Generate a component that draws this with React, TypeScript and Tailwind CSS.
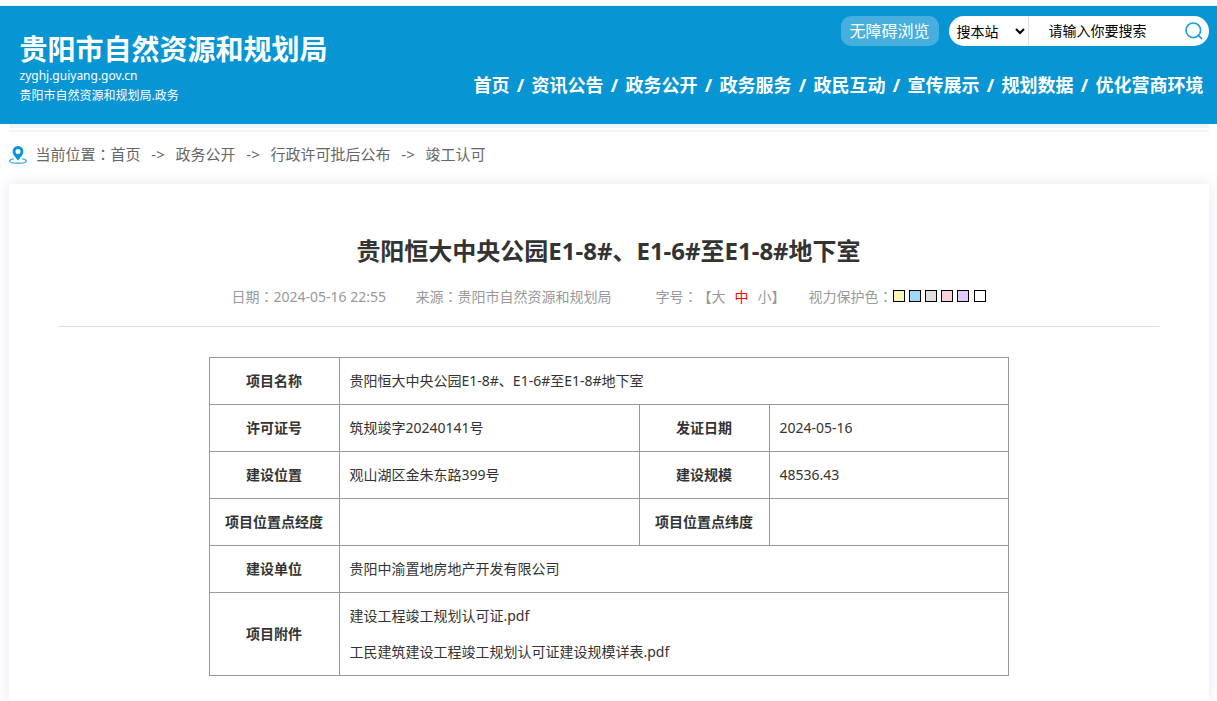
import React from "react";

const NAV = ["首页", "资讯公告", "政务公开", "政务服务", "政民互动", "宣传展示", "规划数据", "优化营商环境"];
const CRUMBS = ["首页", "政务公开", "行政许可批后公布", "竣工认可"];
const SWATCHES = [
  { name: "黄色", className: "bg-[#faf4ae]" },
  { name: "蓝色", className: "bg-[#9cdaf6]" },
  { name: "灰色", className: "bg-[#dfdfdf]" },
  { name: "粉色", className: "bg-[#fbd1d9]" },
  { name: "紫色", className: "bg-[#e3c8fa]" },
];

function PinIcon() {
  return (
    <svg className="h-[18px] w-[18px] shrink-0" viewBox="0 0 18 18" aria-hidden="true">
      <path
        d="M4.8 12.9C2.3 13.3.7 14 .7 15c0 1.400 3.700 2.300 8.300 2.300s8.300-.9 8.300-2.300c0-1-1.600-1.700-4.100-2.100"
        fill="none"
        stroke="#4bb3e0"
        strokeWidth="1.400"
      />
      <path
        fillRule="evenodd"
        fill="#0895d3"
        d="M9 0a5.400 5.400 0 0 0-5.400 5.400C3.600 8.600 6.600 11 9 14.600c2.400-3.600 5.400-6 5.400-9.200A5.400 5.400 0 0 0 9 0Zm0 2.900a2.500 2.500 0 1 1 0 5 2.500 2.500 0 0 1 0-5Z"
      />
    </svg>
  );
}

function SearchIcon() {
  return (
    <svg className="h-[18px] w-[18px]" viewBox="0 0 18 18" fill="none" stroke="#1ba5d8" strokeWidth="1.700" aria-hidden="true">
      <circle cx="8.300" cy="8.300" r="7.300" />
      <path d="M13.600 13.600l3 3" strokeLinecap="round" />
    </svg>
  );
}

/* The Traditional Chinese face centres the full-width colon in its cell. */
function Colon() {
  return (
    <span lang="zh-TW" className="font-['Noto_Sans_CJK_TC',sans-serif] leading-none">
      ：
    </span>
  );
}

function Header() {
  return (
    <header className="border-t border-[#e4f3fa] bg-[#0895d3] text-white">
      <div className="mx-auto flex h-[118px] w-full max-w-[1200px] justify-between">
        <div className="pt-[26px] pl-[11px]">
          <div className="text-[28px] leading-[34px] font-bold whitespace-nowrap">贵阳市自然资源和规划局</div>
          <div className="text-[12px] leading-[20px]">zyghj.guiyang.gov.cn</div>
          <div className="text-[12px] leading-[20px]">贵阳市自然资源和规划局.政务</div>
        </div>
        <div className="flex flex-col items-end pt-[10px]">
          <div className="flex gap-[10px]">
            <button type="button" className="h-[30px] w-[98px] rounded-[10px] bg-[#46afde] text-[16px] leading-[30px]">
              无障碍浏览
            </button>
            <form className="flex h-[30px] w-[260px] items-center rounded-full bg-white pl-1 text-[14px] text-black" onSubmit={(e) => e.preventDefault()}>
              <select aria-label="搜索范围" className="h-[28px] w-[75px] bg-transparent text-[14px] outline-none">
                <option>搜本站</option>
              </select>
              <input
                aria-label="搜索"
                type="text"
                placeholder="请输入你要搜索"
                className="h-[30px] w-0 flex-1 border-l border-[#dddddd] pb-[2px] pl-5 text-[14px] outline-none placeholder:text-black"
              />
              <button type="submit" aria-label="提交搜索" className="flex w-[30px] items-center justify-center">
                <SearchIcon />
              </button>
            </form>
          </div>
          <nav className="flex pt-[24px] pr-[5px] text-[18px] leading-[30px] font-bold whitespace-nowrap">
            {NAV.map((item, i) => (
              <React.Fragment key={item}>
                {i > 0 && <span className="w-[22px] text-center">/</span>}
                <a href="#">{item}</a>
              </React.Fragment>
            ))}
          </nav>
        </div>
      </div>
    </header>
  );
}

const labelCell = "border border-[#999999] p-[5px] text-center font-bold";
const valueCell = "border border-[#999999] px-[10px] py-[5px] text-left";

function DetailTable() {
  return (
    <table className="mx-auto mt-[30px] w-full max-w-[800px] table-fixed border-collapse text-[14px] leading-[36px] text-[#333333]">
      <colgroup>
        <col className="w-[130px]" />
        <col className="w-[300px]" />
        <col className="w-[130px]" />
        <col />
      </colgroup>
      <tbody>
        <tr>
          <th scope="row" className={labelCell}>项目名称</th>
          <td colSpan={3} className={valueCell}>贵阳恒大中央公园E1-8#、E1-6#至E1-8#地下室</td>
        </tr>
        <tr>
          <th scope="row" className={labelCell}>许可证号</th>
          <td className={valueCell}>筑规竣字20240141号</td>
          <th scope="row" className={labelCell}>发证日期</th>
          <td className={valueCell}>2024-05-16</td>
        </tr>
        <tr>
          <th scope="row" className={labelCell}>建设位置</th>
          <td className={valueCell}>观山湖区金朱东路399号</td>
          <th scope="row" className={labelCell}>建设规模</th>
          <td className={valueCell}>48536.43</td>
        </tr>
        <tr>
          <th scope="row" className={labelCell}>项目位置点经度</th>
          <td className={valueCell}></td>
          <th scope="row" className={labelCell}>项目位置点纬度</th>
          <td className={valueCell}></td>
        </tr>
        <tr>
          <th scope="row" className={labelCell}>建设单位</th>
          <td colSpan={3} className={valueCell}>贵阳中渝置地房地产开发有限公司</td>
        </tr>
        <tr>
          <th scope="row" className={labelCell}>项目附件</th>
          <td colSpan={3} className={valueCell}>
            <a href="#" className="block">建设工程竣工规划认可证.pdf</a>
            <a href="#" className="block">工民建筑建设工程竣工规划认可证建设规模详表.pdf</a>
          </td>
        </tr>
      </tbody>
    </table>
  );
}

export default function App() {
  return (
    <div lang="zh-CN" className="flex min-h-screen flex-col overflow-hidden bg-white pt-[5px] font-['Noto_Sans','Noto_Sans_CJK_SC',sans-serif]">
      <Header />
      <div className="mx-auto flex w-full max-w-[1200px] flex-1 flex-col">
        <div className="h-1 bg-[#f0f5f9]" />
        <div className="mt-[2px] h-[2px] bg-[#f0f5f9]" />
        <nav aria-label="当前位置" className="flex h-[52px] items-center pb-[6px] text-[15px] leading-[24px] text-[#666666]">
          <PinIcon />
          <span className="pb-[2px] pl-[9px]">
            当前位置
            <Colon />
          </span>
          {CRUMBS.map((crumb, i) => (
            <React.Fragment key={crumb}>
              {i > 0 && <span className="w-[35px] pb-[2px] text-center">-&gt;</span>}
              <a href="#" className="pb-[2px]">{crumb}</a>
            </React.Fragment>
          ))}
        </nav>
        <main className="flex-1 bg-white px-[50px] pt-[47px] pb-[25px] shadow-[0_0_14px_rgba(60,100,160,0.15)]">
          <h1 className="text-center text-[24px] leading-[40px] font-bold text-[#333333]">贵阳恒大中央公园E1-8#、E1-6#至E1-8#地下室</h1>
          <div className="flex h-[56px] justify-center border-b border-[#dddddd] pt-[11px] text-[14px] leading-[30px] whitespace-nowrap text-[#999999]">
            <span className="w-[184px]">
              日期
              <Colon />
              2024-05-16 22:55
            </span>
            <span className="w-[240px]">
              来源
              <Colon />
              贵阳市自然资源和规划局
            </span>
            <span className="w-[153px]">
              字号
              <Colon />
              <span className="inline-block">【</span>
              <button type="button" className="align-baseline">大</button>
              <button type="button" className="mx-[9px] align-baseline text-[#ff0000]">中</button>
              <button type="button" className="align-baseline">小</button>
              <span>】</span>
            </span>
            <span>
              视力保护色
              <Colon />
            </span>
            <span className="flex h-[28px] items-center gap-1">
              {SWATCHES.map((s) => (
                <button key={s.name} type="button" aria-label={s.name} className={`h-3 w-3 border border-black ${s.className}`} />
              ))}
              <button type="button" aria-label="白色" className="ml-[1px] h-3 w-3 border border-black bg-white" />
            </span>
          </div>
          <DetailTable />
        </main>
      </div>
    </div>
  );
}
